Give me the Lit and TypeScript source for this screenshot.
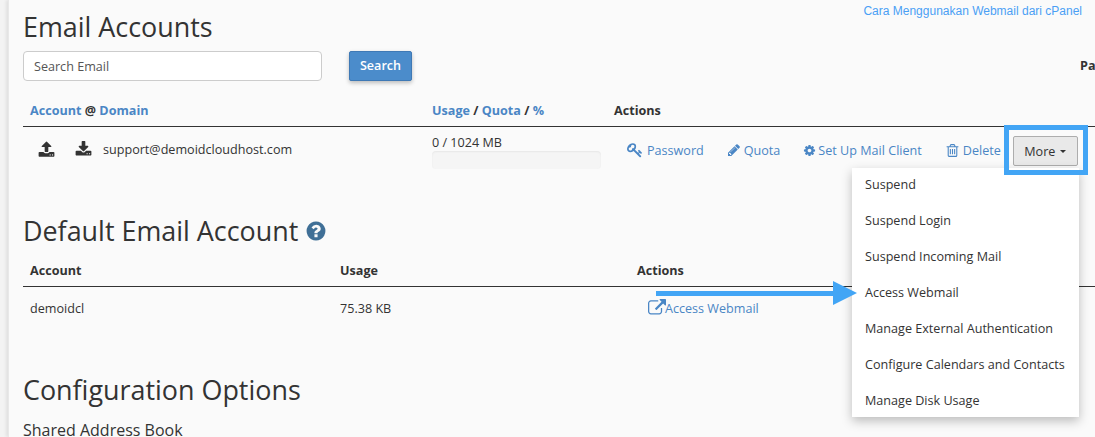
import { LitElement, html, css, svg } from "lit";
import { customElement } from "lit/decorators.js";

const P: Record<string, string> = {
  upload: "M1344 1472q0-26-19-45t-45-19-45 19-19 45 19 45 45 19 45-19 19-45zm256 0q0-26-19-45t-45-19-45 19-19 45 19 45 45 19 45-19 19-45zm128-224v320q0 40-28 68t-68 28h-1472q-40 0-68-28t-28-68v-320q0-40 28-68t68-28h427q21 56 70.5 92t110.5 36h256q61 0 110.5-36t70.5-92h427q40 0 68 28t28 68zm-325-648q-17 40-59 40h-256v448q0 26-19 45t-45 19h-256q-26 0-45-19t-19-45v-448h-256q-42 0-59-40-17-39 14-69l448-448q18-19 45-19t45 19l448 448q31 30 14 69z",
  download: "M1344 1344q0-26-19-45t-45-19-45 19-19 45 19 45 45 19 45-19 19-45zm256 0q0-26-19-45t-45-19-45 19-19 45 19 45 45 19 45-19 19-45zm128-224v320q0 40-28 68t-68 28h-1472q-40 0-68-28t-28-68v-320q0-40 28-68t68-28h465l135 136q58 56 136 56t136-56l136-136h464q40 0 68 28t28 68zm-325-569q17 41-14 70l-448 448q-18 19-45 19t-45-19l-448-448q-31-29-14-70 17-39 59-39h256v-448q0-26 19-45t45-19h256q26 0 45 19t19 45v448h256q42 0 59 39z",
  key: "M832 512q0-80-56-136t-136-56-136 56-56 136q0 42 19 83-41-19-83-19-80 0-136 56t-56 136 56 136 136 56 136-56 56-136q0-42-19-83 41 19 83 19 80 0 136-56t56-136zm851 704q0 17-49 66t-66 49q-9 0-28.5-16t-36.5-33-38.5-40-24.5-26l-96 96 220 220q28 28 28 68 0 42-39 81t-81 39q-40 0-68-28l-671-671q-176 131-365 131-163 0-265.5-102.5t-102.5-265.5q0-160 95-313t248-248 313-95q163 0 265.5 102.5t102.5 265.5q0 189-131 365l355 355 96-96q-3-3-26-24.5t-40-38.5-33-36.5-16-28.5q0-17 49-66t66-49q13 0 23 10 6 6 46 44.5t82 79.5 86.5 86 73 78 28.5 41z",
  pencil: "M491 1536l91-91-235-235-91 91v107h128v128h107zm523-928q0-22-22-22-10 0-17 7l-542 542q-7 7-7 17 0 22 22 22 10 0 17-7l542-542q7-7 7-17zm-54-192l416 416-832 832h-416v-416zm683 96q0 53-37 90l-166 166-416-416 166-165q36-38 90-38 53 0 91 38l235 234q37 39 37 91z",
  cog: "M1152 896q0-106-75-181t-181-75-181 75-75 181 75 181 181 75 181-75 75-181zm512-109v222q0 12-8 23t-20 13l-185 28q-19 54-39 91 35 50 107 138 10 12 10 25t-9 23q-27 37-99 108t-94 71q-12 0-26-9l-138-108q-44 23-91 38-16 136-29 186-7 28-36 28h-222q-14 0-24.5-8.5t-11.5-21.5l-28-184q-49-16-90-37l-141 107q-10 9-25 9-14 0-25-11-126-114-165-168-7-10-7-23 0-12 8-23 15-21 51-66.5t54-70.5q-27-50-41-99l-183-27q-13-2-21-12.5t-8-23.5v-222q0-12 8-23t19-13l186-28q14-46 39-92-40-57-107-138-10-12-10-24 0-10 9-23 26-36 98.5-107.5t94.5-71.5q13 0 26 10l138 107q44-23 91-38 16-136 29-186 7-28 36-28h222q14 0 24.5 8.5t11.5 21.5l28 184q49 16 90 37l142-107q9-9 24-9 13 0 25 10 129 119 165 170 7 8 7 22 0 12-8 23-15 21-51 66.5t-54 70.5q26 50 41 98l183 28q13 2 21 12.5t8 23.5z",
  trash: "M704 736v576q0 14-9 23t-23 9h-64q-14 0-23-9t-9-23v-576q0-14 9-23t23-9h64q14 0 23 9t9 23zm256 0v576q0 14-9 23t-23 9h-64q-14 0-23-9t-9-23v-576q0-14 9-23t23-9h64q14 0 23 9t9 23zm256 0v576q0 14-9 23t-23 9h-64q-14 0-23-9t-9-23v-576q0-14 9-23t23-9h64q14 0 23 9t9 23zm128 724v-948h-896v948q0 22 7 40.5t14.5 27 10.5 8.5h832q3 0 10.5-8.5t14.5-27 7-40.5zm-672-1076h448l-48-117q-7-9-17-11h-317q-10 2-17 11zm928 32v64q0 14-9 23t-23 9h-96v948q0 83-47 143.5t-113 60.5h-832q-66 0-113-58.5t-47-141.5v-952h-96q-14 0-23-9t-9-23v-64q0-14 9-23t23-9h309l70-167q15-37 54-63t79-26h320q40 0 79 26t54 63l70 167h309q14 0 23 9t9 23z",
  ext: "M1408 928v320q0 119-84.5 203.5t-203.5 84.5h-832q-119 0-203.5-84.5t-84.5-203.5v-832q0-119 84.5-203.5t203.5-84.5h704q14 0 23 9t9 23v64q0 14-9 23t-23 9h-704q-66 0-113 47t-47 113v832q0 66 47 113t113 47h832q66 0 113-47t47-113v-320q0-14 9-23t23-9h64q14 0 23 9t9 23zm384-864v512q0 26-19 45t-45 19-45-19l-176-176-652 652q-10 10-23 10t-23-10l-114-114q-10-10-10-23t10-23l652-652-176-176q-19-19-19-45t19-45 45-19h512q26 0 45 19t19 45z",
  help: "M1024 1376v-192q0-14-9-23t-23-9h-192q-14 0-23 9t-9 23v192q0 14 9 23t23 9h192q14 0 23-9t9-23zm256-672q0-88-55.5-163t-138.5-116-170-41q-243 0-371 213-15 24 8 42l132 100q7 6 19 6 16 0 25-12 53-68 86-92 34-24 86-24 48 0 85.5 26t37.5 59q0 38-20 61t-68 45q-63 28-115.5 86.5t-52.5 125.5v36q0 14 9 23t23 9h192q14 0 23-9t9-23q0-19 21.5-49.5t54.5-49.5q32-18 49-28.5t46-35 44.5-48 28-60.5 12.5-81zm384 192q0 209-103 385.5t-279.5 279.5-385.5 103-385.5-103-279.5-279.5-103-385.5 103-385.5 279.5-279.5 385.5-103 385.5 103 279.5 279.5 103 385.5z",
};

const icon = (name: string, size: number) => html`<svg class="ico" width=${size} height=${size} viewBox="0 0 1792 1792" fill="currentColor">${svg`<path d=${P[name]}></path>`}</svg>`;

const MENU = ["Suspend", "Suspend Login", "Suspend Incoming Mail", "Access Webmail", "Manage External Authentication", "Configure Calendars and Contacts", "Manage Disk Usage"];

@customElement("app-root")
export class AppRoot extends LitElement {
  static styles = css`
    :host { display: block; position: relative; width: 1095px; height: 437px; overflow: hidden; background: #fafafa; font-family: "Open Sans", sans-serif; font-size: 12.6px; color: #333; }
    .page { height: 437px; margin-left: 8px; padding: 0 0 0 14px; border-left: 1px solid #e8e8e8; box-shadow: -2px 0 3px rgba(0,0,0,.08); background: #fafafa; box-sizing: border-box; position: relative; }
    .shell { position: absolute; inset: 0 auto 0 0; width: 8px; background: #f3f3f3; }
    a { color: #4a86c5; text-decoration: none; }
    .ico { display: block; flex: none; }
    h1 { margin: 0; font-weight: 400; font-size: 26.9px; line-height: 36px; color: #333; }
    .top { padding-top: 9px; height: 51px; box-sizing: border-box; }
    .guide { position: absolute; right: 13px; top: 4px; font: 12px/14px "Liberation Sans", sans-serif; color: #4a9ff5; }
    .search { display: flex; align-items: flex-start; height: 45px; }
    .input { width: 299px; height: 30px; box-sizing: border-box; border: 1px solid #ccc; border-radius: 4px; background: #fff; padding: 0 10px; line-height: 30px; color: #555; }
    .btn { margin-left: 27px; width: 63px; height: 30px; box-sizing: border-box; border: 1px solid #3f79b5; border-radius: 2px; background: #4b8ccb; color: #fff; font-weight: 600; text-align: center; line-height: 28px; box-shadow: 0 2px 4px rgba(0,0,0,.25); }
    .pa { position: absolute; left: 1080px; top: 57px; font-weight: 700; line-height: 18px; }
    .t1, .t2 { display: grid; }
    .t1 { grid-template-columns: 402px 182px 1fr; }
    .t2 { grid-template-columns: 310px 297px 1fr; margin-top: 8px; }
    .th { font-weight: 700; line-height: 18px; padding: 6px 7px 0; height: 31px; border-bottom: 1px solid #333; box-sizing: border-box; }
    .td { padding: 0 7px; box-sizing: border-box; }
    .t1 .td { height: 50px; }
    .t2 .td { height: 42px; display: flex; align-items: center; }
    .acct { display: flex; align-items: center; padding: 0 0 6px 15px !important; }
    .acct .ico:nth-child(2) { margin-left: 20px; }
    .acct span { margin-left: 11px; }
    .usage { padding-top: 7px !important; line-height: 17px; }
    .bar { width: 169px; height: 18px; background: #f5f5f5; border-radius: 4px; box-shadow: inset 0 1px 2px rgba(0,0,0,.06); }
    .acts { display: flex; align-items: center; padding: 0 0 4px 20px !important; }
    .act { display: flex; align-items: center; gap: 3px; color: #4a86c5; margin-right: 23px; }
    .act.key { gap: 4px; }
    .act.cog { gap: 2px; }
    .more { margin: 2px 0 0 -11px; height: 30px; width: 65px; box-sizing: border-box; border: 1px solid #adadad; border-radius: 2px; background: #e9e9e9; display: flex; align-items: center; justify-content: center; gap: 5px; color: #333; }
    .caret { width: 0; height: 0; border: 3px solid transparent; border-top-color: #333; border-bottom: 0; }
    h2 { margin: 0; font-weight: 400; font-size: 26.9px; line-height: 36px; display: flex; align-items: center; gap: 7px; color: #333; position: relative; top: 1px; }
    .sec2 { padding-top: 35px; }
    .sec3 { padding-top: 42px; }
    h3 { margin: 12px 0 0; font-weight: 400; font-size: 16px; line-height: 22px; }
    .help { color: #3f6f96; }
    .access { display: flex; align-items: center; color: #4a86c5; margin-left: 11px; }
    .access .ico { margin-right: -1px; }
    .menu { position: absolute; left: 852px; top: 168px; width: 227px; height: 249px; box-sizing: border-box; padding: 8px 10px 7px 13px; background: #fff; box-shadow: 0 4px 10px rgba(0,0,0,.25); display: flex; flex-direction: column; gap: 18px; line-height: 18px; white-space: nowrap; }
    .frame { position: absolute; left: 1004px; top: 125px; width: 84px; height: 50px; box-sizing: border-box; border: 5px solid #42a5f5; }
    .arrow { position: absolute; left: 656px; top: 281px; }
  `;

  render() {
    return html`
      <div class="shell"></div>
      <div class="page">
        <div class="top"><h1>Email Accounts</h1></div>
        <div class="search">
          <div class="input">Search Email</div>
          <div class="btn">Search</div>
        </div>
        <div class="t1">
          <div class="th"><a>Account</a> @ <a>Domain</a></div>
          <div class="th"><a>Usage</a> / <a>Quota</a> / <a>%</a></div>
          <div class="th">Actions</div>
          <div class="td acct">${icon("upload", 17)}${icon("download", 17)}<span>support@demoidcloudhost.com</span></div>
          <div class="td usage">0 / 1024 MB<div class="bar"></div></div>
          <div class="td acts">
            <a class="act key">${icon("key", 16)}Password</a>
            <a class="act">${icon("pencil", 14)}Quota</a>
            <a class="act cog">${icon("cog", 13)}Set Up Mail Client</a>
            <a class="act">${icon("trash", 15)}Delete</a>
            <div class="more">More<span class="caret"></span></div>
          </div>
        </div>
        <div class="sec2">
          <h2>Default Email Account<span class="help">${icon("help", 22)}</span></h2>
          <div class="t2">
            <div class="th">Account</div>
            <div class="th">Usage</div>
            <div class="th">Actions</div>
            <div class="td">demoidcl</div>
            <div class="td">75.38 KB</div>
            <div class="td"><a class="access">${icon("ext", 18)}Access Webmail</a></div>
          </div>
        </div>
        <div class="sec3">
          <h2>Configuration Options</h2>
          <h3>Shared Address Book</h3>
        </div>
      </div>
      <a class="guide">Cara Menggunakan Webmail dari cPanel</a>
      <div class="pa">Pa</div>
      <div class="menu">${MENU.map((m) => html`<div>${m}</div>`)}</div>
      <div class="frame"></div>
      <svg class="arrow" width="201" height="24" viewBox="0 0 201 24"><path d="M0 10h177V0l24 12-24 12V15H0z" fill="#42a5f5"></path></svg>
    `;
  }
}
